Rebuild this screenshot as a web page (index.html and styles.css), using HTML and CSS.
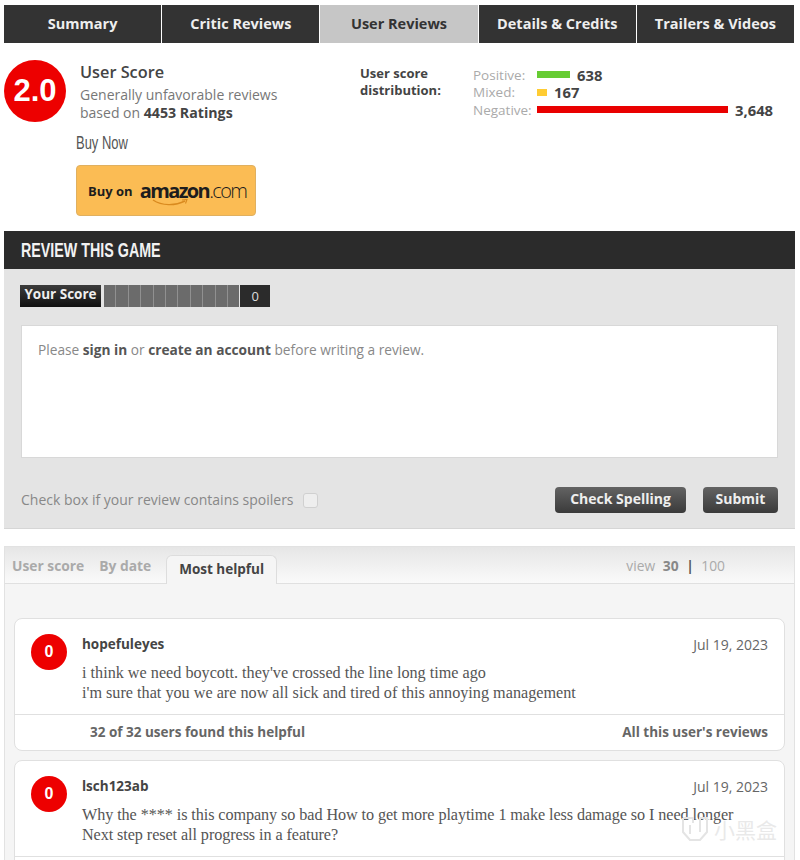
FILE: index.html
```html
<!DOCTYPE html>
<html lang="en">
  <head>
    <meta charset="UTF-8" />
    <title>User Reviews</title>
    <link rel="stylesheet" href="styles.css">
  </head>
  <body>
    <div class="page">
      <nav class="tabs">
        <a class="tab">Summary</a>
        <a class="tab">Critic Reviews</a>
        <a class="tab active">User Reviews</a>
        <a class="tab">Details &amp; Credits</a>
        <a class="tab">Trailers &amp; Videos</a>
      </nav>

      <section class="score-summary">
        <div class="score-circle">2.0</div>
        <div class="score-info">
          <h2>User Score</h2>
          <p>Generally unfavorable reviews<br>based on <b>4453 Ratings</b></p>
        </div>
        <div class="dist-label">User score<br>distribution:</div>
        <div class="dist">
          <div class="dist-row">
            <span class="dist-name">Positive:</span>
            <span class="bar green"></span><b>638</b>
          </div>
          <div class="dist-row">
            <span class="dist-name">Mixed:</span>
            <span class="bar yellow"></span><b>167</b>
          </div>
          <div class="dist-row">
            <span class="dist-name">Negative:</span>
            <span class="bar red"></span><b>3,648</b>
          </div>
        </div>
      </section>

      <div class="buy">
        <div class="buy-title"><span>Buy Now</span></div>
        <div class="amazon">
          <span class="buy-on">Buy on</span>
          <span class="amazon-logo"><b>amazon</b>.com
            <svg class="smile" width="36" height="8" viewBox="0 0 36 8">
              <path d="M1 1c9 6 22 6 32 1" fill="none" stroke="#d98a1f" stroke-width="1.4" />
              <path d="M30 1l5-.5-1.500 4" fill="none" stroke="#d98a1f" stroke-width="1.100" />
            </svg>
          </span>
        </div>
      </div>

      <section class="review-form">
        <div class="form-header"><span>REVIEW THIS GAME</span></div>
        <div class="form-body">
          <div class="your-score">
            <span class="your-score-label">Your Score</span>
            <div class="cells">
              <i></i><i></i><i></i><i></i><i></i><i></i><i></i><i></i><i></i><i></i><i></i>
            </div>
            <span class="your-score-value">0</span>
          </div>
          <div class="review-box">
            Please <b>sign in</b> or <b>create an account</b> before writing a review.
          </div>
          <div class="form-actions">
            <span class="spoiler">Check box if your review contains spoilers</span>
            <span class="checkbox"></span>
            <button class="btn spell">Check Spelling</button>
            <button class="btn submit">Submit</button>
          </div>
        </div>
      </section>

      <section class="reviews">
        <div class="reviews-bar">
          <a class="sort">User score</a>
          <a class="sort">By date</a>
          <a class="sort current">Most helpful</a>
          <div class="view">view <b>30</b> <em>|</em> 100</div>
        </div>
        <div class="reviews-body">
          <article class="card">
            <div class="card-main">
              <div class="avatar">0</div>
              <div class="card-content">
                <div class="card-head">
                  <span class="name">hopefuleyes</span>
                  <span class="date">Jul 19, 2023</span>
                </div>
                <p class="text">i think we need boycott. they've crossed the line long time ago<br>i'm sure that you we are now all sick and tired of this annoying management</p>
              </div>
            </div>
            <div class="card-foot">
              <span>32 of 32 users found this helpful</span>
              <span>All this user's reviews</span>
            </div>
          </article>
          <article class="card">
            <div class="card-main">
              <div class="avatar">0</div>
              <div class="card-content">
                <div class="card-head">
                  <span class="name">lsch123ab</span>
                  <span class="date">Jul 19, 2023</span>
                </div>
                <p class="text tight">Why the **** is this company so bad How to get more playtime 1 make less damage so I need longer<br>Next step reset all progress in a feature?</p>
              </div>
            </div>
            <div class="card-foot"></div>
          </article>
        </div>
      </section>

      <div class="watermark">
        <svg width="30" height="26" viewBox="0 0 30 26">
          <path d="M3 2h10v5M3 2v14l7 8h10l7-8V2h-7v14" fill="none" stroke="#e4e4e4" stroke-width="2" />
          <path d="M10 9v9" fill="none" stroke="#e4e4e4" stroke-width="2" />
        </svg>
        <span>小黑盒</span>
      </div>
    </div>
  </body>
</html>
```

FILE: styles.css
```css
html,
body {
  margin: 0;
  height: 860px;
  overflow: hidden;
  background: #fff;
}
body {
  font-family: "Open Sans", "Noto Sans", sans-serif;
  color: #333;
}
.page {
  position: relative;
  height: 860px;
  overflow: hidden;
  padding: 5px 5px 0 4px;
  box-sizing: border-box;
}
.tabs {
  display: flex;
  gap: 1px;
  height: 38px;
  margin-right: 1px;
}
.tab {
  flex: 1;
  display: flex;
  align-items: center;
  justify-content: center;
  padding-bottom: 2px;
  box-sizing: border-box;
  background: #333;
  color: #eee;
  font-size: 14.500px;
  font-weight: 700;
}
.tab.active {
  background: #c6c6c6;
  color: #333;
}
.score-summary {
  display: flex;
  height: 79px;
  padding-top: 17px;
  box-sizing: border-box;
}
.score-circle {
  width: 62px;
  height: 62px;
  flex: none;
  border-radius: 50%;
  background: #ed0000;
  color: #fff;
  font-family: "Liberation Sans", sans-serif;
  font-size: 31px;
  font-weight: 700;
  line-height: 62px;
  text-align: center;
}
.score-info {
  width: 280px;
  margin-left: 14px;
  padding-top: 2px;
}
.score-info h2 {
  margin: 0;
  font-size: 16.300px;
  font-weight: 600;
  line-height: 20px;
  color: #444;
}
.score-info p {
  margin: 4px 0 0;
  font-size: 14px;
  line-height: 18px;
  color: #777;
}
.score-info b {
  color: #444;
  font-size: 14.200px;
}
.dist-label {
  width: 113px;
  margin-top: 5px;
  font-size: 13px;
  font-weight: 700;
  line-height: 17px;
  color: #444;
}
.dist {
  flex: 1;
  margin-top: 6px;
}
.dist-row {
  display: flex;
  align-items: center;
  height: 17.500px;
  font-size: 13.500px;
  color: #aaa;
}
.dist-name {
  width: 64px;
  flex: none;
}
.dist-row b {
  font-size: 14.800px;
  color: #444;
  margin-left: 7px;
}
.bar {
  height: 7px;
}
.bar.green {
  width: 33px;
  background: #66cc33;
}
.bar.yellow {
  width: 10px;
  background: #ffcc33;
}
.bar.red {
  width: 191px;
  background: #e90000;
}
.buy {
  padding-left: 72px;
  height: 98px;
  margin-top: 10px;
}
.buy-title {
  height: 22px;
  font-family: "Liberation Sans", sans-serif;
  font-size: 18px;
  line-height: 22px;
  color: #555;
}
.buy-title span {
  display: inline-block;
  transform: scaleX(0.72);
  transform-origin: left;
}
.amazon {
  display: flex;
  align-items: center;
  width: 180px;
  height: 51px;
  margin-top: 11px;
  padding-left: 11px;
  box-sizing: border-box;
  border: 1px solid #e0b060;
  border-radius: 4px;
  background: #fbbc54;
  color: #1d1d1d;
}
.buy-on {
  font-size: 13px;
  font-weight: 700;
  margin-right: 7px;
  white-space: nowrap;
}
.amazon-logo {
  position: relative;
  font-size: 20px;
  font-weight: 300;
  letter-spacing: -1.600px;
  line-height: 22px;
  white-space: nowrap;
}
.amazon-logo b {
  font-weight: 700;
}
.smile {
  position: absolute;
  left: 12px;
  bottom: -5px;
}
.review-form {
  background: #e4e4e4;
  height: 298px;
  margin-top: 1px;
  border-bottom: 1px solid #d6d6d6;
  box-sizing: border-box;
}
.form-header {
  height: 38px;
  background: #2b2b2b;
  color: #f2f2f2;
  font-family: "Liberation Sans", sans-serif;
  font-size: 21px;
  font-weight: 700;
  line-height: 38px;
  padding-left: 17px;
}
.form-header span {
  display: inline-block;
  transform: scaleX(0.68);
  transform-origin: left;
  white-space: nowrap;
}
.form-body {
  padding: 16px 17px 0 16px;
}
.your-score {
  display: flex;
  height: 22px;
}
.your-score-label {
  width: 81px;
  background: linear-gradient(#3c3c3c, #111);
  color: #eee;
  font-size: 13.500px;
  font-weight: 700;
  line-height: 18px;
  text-align: center;
  white-space: nowrap;
}
.cells {
  display: flex;
  gap: 1px;
  margin-left: 3px;
  background: #909090;
}
.cells i {
  width: 11.400px;
  background: #6b6b6b;
}
.your-score-value {
  width: 30px;
  margin-left: 1px;
  background: #2b2b2b;
  color: #ddd;
  font-size: 13px;
  line-height: 23px;
  text-align: center;
}
.review-box {
  height: 133px;
  margin: 18px 0 0 1px;
  padding: 15px 16px;
  box-sizing: border-box;
  background: #fff;
  border: 1px solid #d8d8d8;
  font-size: 13.700px;
  line-height: 18px;
  color: #888;
}
.review-box b {
  color: #555;
}
.form-actions {
  display: flex;
  align-items: center;
  height: 26px;
  margin-top: 29px;
  padding-left: 1px;
}
.spoiler {
  padding-bottom: 1px;
  font-size: 14px;
  color: #888;
}
.checkbox {
  width: 13px;
  height: 13px;
  margin-left: 9px;
  background: #eee;
  border: 1px solid #d0d0d0;
  border-radius: 3px;
}
.btn {
  height: 26px;
  padding: 0 0 3px;
  border: none;
  border-radius: 4px;
  background: linear-gradient(#636363, #3a3a3a);
  color: #eee;
  font-family: inherit;
  font-size: 14px;
  font-weight: 700;
}
.spell {
  width: 131px;
  margin-left: auto;
}
.submit {
  width: 75px;
  margin-left: 17px;
}
.reviews {
  margin-top: 17px;
  height: 400px;
  background: #f5f5f5;
  border: 1px solid #e2e2e2;
  border-bottom: none;
  box-sizing: border-box;
}
.reviews-bar {
  display: flex;
  align-items: flex-end;
  height: 37px;
  padding-left: 7px;
  box-sizing: border-box;
  background: linear-gradient(#e6e6e6, #fafafa);
  border-bottom: 1px solid #e0e0e0;
  font-size: 13.800px;
  font-weight: 700;
  color: #aaa;
}
.sort {
  margin-right: 15px;
  padding-bottom: 8px;
}
.sort.current {
  height: 29px;
  width: 111px;
  margin-bottom: -1px;
  margin-right: 0;
  padding: 0;
  box-sizing: border-box;
  background: #f5f5f5;
  border: 1px solid #ddd;
  border-bottom: none;
  border-radius: 6px 6px 0 0;
  color: #444;
  font-size: 13.500px;
  line-height: 26px;
  text-align: center;
}
.view {
  margin-left: auto;
  margin-right: 69px;
  padding-bottom: 8px;
  font-weight: 400;
  color: #aaa;
}
.view b {
  color: #888;
  margin: 0 4px;
}
.view em {
  font-style: normal;
  font-weight: 700;
  color: #555;
  margin-right: 4px;
}
.reviews-body {
  padding: 34px 9px 0;
}
.card {
  background: #fff;
  border: 1px solid #e0e0e0;
  border-radius: 8px;
  margin-bottom: 9px;
}
.card-main {
  display: flex;
  height: 95px;
  padding: 15px 16px 0 16px;
  box-sizing: border-box;
}
.avatar {
  width: 36px;
  height: 36px;
  flex: none;
  border-radius: 50%;
  background: #ed0000;
  color: #fff;
  font-family: "Liberation Sans", sans-serif;
  font-size: 16px;
  font-weight: 700;
  line-height: 36px;
  text-align: center;
}
.card-content {
  flex: 1;
  margin-left: 15px;
}
.card-head {
  display: flex;
  justify-content: space-between;
  height: 20px;
  line-height: 20px;
}
.name {
  font-size: 13.500px;
  font-weight: 700;
  color: #444;
}
.date {
  font-size: 14px;
  line-height: 22px;
  color: #666;
}
.text {
  margin: 9px 0 0;
  font-family: "Liberation Serif", serif;
  font-size: 16.200px;
  line-height: 20px;
  color: #555;
  white-space: nowrap;
}
.text.tight {
  letter-spacing: -0.08px;
}
.card-foot {
  display: flex;
  justify-content: space-between;
  height: 35px;
  padding: 0 16px 0 75px;
  border-top: 1px solid #e0e0e0;
  font-size: 13.500px;
  font-weight: 700;
  line-height: 35px;
  color: #666;
}
.watermark {
  position: absolute;
  left: 680px;
  top: 814px;
  display: flex;
  align-items: center;
  gap: 4px;
  color: rgba(228, 228, 228, 0.8);
  font-family: "Noto Sans CJK SC", sans-serif;
  font-size: 21px;
}
```
